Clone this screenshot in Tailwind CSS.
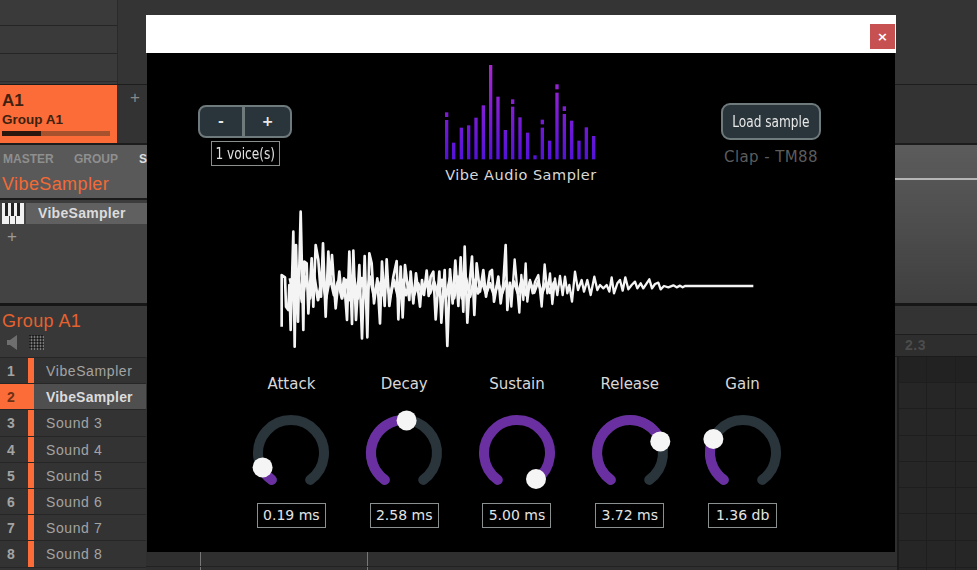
<!DOCTYPE html>
<html lang="en">
<head>
    <meta charset="utf-8">
    <title>Vibe Audio Sampler</title>
    <script src="https://cdn.jsdelivr.net/npm/@tailwindcss/browser@4"></script>
</head>
<body class="relative h-[570px] w-[977px] overflow-hidden bg-[#333333] font-['Liberation_Sans',sans-serif]">

    <!-- host app behind the plugin -->
    <div class="flex h-[85px] border-b border-[#1c1c1c]">
        <div class="w-[118px] border-r border-[#2a2a2a] bg-[#3a3a3a]">
            <div class="h-[26px] border-b border-[#252525]"></div>
            <div class="h-[28px] border-b border-[#252525]"></div>
            <div class="h-[28px] border-b border-[#2c2c2c]"></div>
        </div>
        <div class="flex-1 bg-[#343434]"></div>
    </div>
    <div class="flex h-[60px] border-b-2 border-[#1c1c1c] bg-[#333333]">
        <div class="flex h-[58px] w-[117px] flex-col bg-[#fb6c38] pl-[2px] text-[#40210f]">
            <div class="mt-[6px] text-[17px] leading-[20px] font-bold">A1</div>
            <div class="text-[13.5px] leading-[18px] font-bold">Group A1</div>
            <div class="mt-[2px] flex h-[5px] w-[108px] bg-[#a8512d]"><div class="w-[39px] bg-[#2b170e]"></div></div>
        </div>
        <div class="ml-[13px] text-[17px] leading-[26px] text-[#888888]">+</div>
    </div>

    <div class="flex h-[161px] border-b-[3px] border-[#161616]">
        <div class="flex w-[500px] flex-col bg-[#434343]">
            <div class="h-[53px] bg-[#595959] pl-[3px]">
                <div class="flex pt-[7px] text-[12px] leading-[14px] font-bold text-[#8f8f8f]">
                    <span class="w-[71px]">MASTER</span><span class="w-[65px]">GROUP</span><span class="text-[#dddddd]">S</span>
                </div>
                <div class="mt-[8px] -ml-[1px] text-[18px] leading-[21px] tracking-[0.4px] text-[#f26a35]">VibeSampler</div>
            </div>
            <div class="h-[5px] border-t-2 border-[#1b1b1b] bg-[#3c3c3c]"></div>
            <div class="flex h-[21px]">
                <svg class="ml-[2px] w-[22px]" width="22" height="21" viewBox="0 0 22 21">
                    <rect width="22" height="21" fill="#f2f2f2"/>
                    <rect x="3" width="3" height="13" fill="#222222"/><rect x="9" width="3" height="13" fill="#222222"/><rect x="15" width="3" height="13" fill="#222222"/>
                    <rect x="7" y="13" width="1" height="8" fill="#444444"/><rect x="13" y="13" width="1" height="8" fill="#444444"/>
                </svg>
                <div class="ml-[2px] flex-1 bg-[#606060] pl-[12px] text-[14px] leading-[21px] font-bold tracking-[0.3px] text-[#dcdcdc]">VibeSampler</div>
            </div>
            <div class="ml-[7px] text-[17px] leading-[26px] text-[#9a9a9a]">+</div>
        </div>
        <div class="flex-1 bg-linear-to-b from-[#5c5c5c] to-[#3f3f3f] pt-[33px]"><div class="h-[2px] bg-[#b5b5b5]"></div></div>
    </div>

    <div class="flex h-[51px]">
        <div class="w-[500px] bg-[#383838] pl-[2px]">
            <div class="pt-[5px] text-[18px] leading-[21px] tracking-[0.4px] text-[#e5622f]">Group A1</div>
            <div class="mt-[3px] flex items-center">
                <svg class="ml-[5px]" width="11" height="15" viewBox="0 0 11 15"><path d="M0 5h3l7-5v15l-7-5H0z" fill="#6e6e6e"/></svg>
                <div class="ml-[11px] h-[15px] w-[15px] bg-[repeating-linear-gradient(90deg,#7a7a7a_0_2px,transparent_2px_3px),repeating-linear-gradient(0deg,#7a7a7a_0_2px,#383838_2px_3px)] bg-blend-multiply"></div>
            </div>
        </div>
        <div class="flex-1 bg-[#333333]">
            <div class="h-[29px] border-b border-[#1d1d1d]"></div>
            <div class="flex h-[22px] items-center border-b border-[#1b1b1b] bg-[#2e2e2e] pl-[405px] text-[14px] font-bold tracking-[0.5px] text-[#4c4c4c]">2.3</div>
        </div>
    </div>

    <div class="flex">
        <div class="w-[146px] shrink-0 border-t border-[#262626] bg-[#333333] text-[14px] leading-[26px] tracking-[0.6px] text-[#a3a3a3]">
            <div class="flex h-[26.2px] border-b border-[#262626]"><span class="w-[28px] pl-[7px] font-bold">1</span><span class="w-[6px] bg-[#fb6c38]"></span><span class="pl-[12px]">VibeSampler</span></div>
            <div class="flex h-[26.2px] border-b border-[#262626]"><span class="w-[34px] bg-[#fb6c38] pl-[7px] font-bold text-[#6e3016]">2</span><span class="flex-1 bg-[#4f4f4f] pl-[12px] font-bold tracking-[0.2px] text-[#dcdcdc]">VibeSampler</span></div>
            <div class="flex h-[26.2px] border-b border-[#262626]"><span class="w-[28px] pl-[7px] font-bold">3</span><span class="w-[6px] bg-[#fb6c38]"></span><span class="pl-[12px]">Sound 3</span></div>
            <div class="flex h-[26.2px] border-b border-[#262626]"><span class="w-[28px] pl-[7px] font-bold">4</span><span class="w-[6px] bg-[#fb6c38]"></span><span class="pl-[12px]">Sound 4</span></div>
            <div class="flex h-[26.2px] border-b border-[#262626]"><span class="w-[28px] pl-[7px] font-bold">5</span><span class="w-[6px] bg-[#fb6c38]"></span><span class="pl-[12px]">Sound 5</span></div>
            <div class="flex h-[26.2px] border-b border-[#262626]"><span class="w-[28px] pl-[7px] font-bold">6</span><span class="w-[6px] bg-[#fb6c38]"></span><span class="pl-[12px]">Sound 6</span></div>
            <div class="flex h-[26.2px] border-b border-[#262626]"><span class="w-[28px] pl-[7px] font-bold">7</span><span class="w-[6px] bg-[#fb6c38]"></span><span class="pl-[12px]">Sound 7</span></div>
            <div class="flex h-[26.2px] border-b border-[#262626]"><span class="w-[28px] pl-[7px] font-bold">8</span><span class="w-[6px] bg-[#fb6c38]"></span><span class="pl-[12px]">Sound 8</span></div>
        </div>
        <div class="relative h-[213px] flex-1 bg-[#2f2f2f]">
            <div class="absolute top-0 bottom-0 left-[54px] w-px bg-[#777777]"></div>
            <div class="absolute top-0 bottom-0 left-[221px] w-px bg-[#777777]"></div>
            <div class="absolute top-[209px] right-0 left-0 h-px bg-[#222222]"></div>
            <div class="absolute top-0 right-0 bottom-0 w-[80px] border-l-2 border-[#1b1b1b] bg-[#262626]">
                <div class="h-[26px] border-b border-[#1e1e1e] bg-[#222222]"></div>
                <div class="h-[26.3px] border-b border-[#1e1e1e]"></div>
                <div class="h-[26.3px] border-b border-[#1e1e1e]"></div>
                <div class="h-[26.3px] border-b border-[#1e1e1e]"></div>
                <div class="h-[26.3px] border-b border-[#1e1e1e]"></div>
                <div class="h-[26.3px] border-b border-[#1e1e1e]"></div>
                <div class="h-[26.3px] border-b border-[#1e1e1e]"></div>
                <div class="h-[27px] border-b border-[#1e1e1e]"></div>
                <div class="absolute top-0 bottom-0 left-[27px] w-px bg-[#1e1e1e]"></div>
                <div class="absolute top-0 bottom-0 left-[56px] w-px bg-[#1e1e1e]"></div>
            </div>
        </div>
    </div>

    <!-- plugin window -->
    <div class="absolute top-[15px] left-[146px] flex h-[537px] w-[750px] flex-col font-['DejaVu_Sans',sans-serif]">
        <div class="flex h-[38px] shrink-0 items-start justify-end bg-white pt-[9px] pr-px">
            <button class="flex h-[25px] w-[25px] items-center justify-center bg-[#c75050] text-[13px] leading-none font-bold text-white">×</button>
        </div>
        <div class="mx-px flex-1 bg-black">
            <div class="flex">
                <div class="mt-[52px] ml-[51px] w-[94px] shrink-0">
                    <div class="flex h-[33px] rounded-[8px] border-2 border-[#6f7a7c] bg-[#29353b] text-[14px] leading-[28px] font-bold text-[#e8e8e8]">
                        <span class="w-[45px] border-r-[3px] border-[#6f7a7c] text-center">-</span>
                        <span class="flex-1 text-center">+</span>
                    </div>
                    <div class="mx-auto mt-[3px] flex h-[25px] w-[69px] justify-center border border-[#8a8f8f] text-[16px] leading-[23px] whitespace-nowrap text-[#e0e0e0]"><span class="shrink-0 scale-x-[0.76]">1 voice(s)</span></div>
                </div>
                <div class="mt-[7px] ml-[148px] w-[160px] shrink-0">
                    <svg width="160" height="110" viewBox="60 30 480 330">
                        <defs>
                            <linearGradient id="bars" gradientUnits="userSpaceOnUse" x1="0" y1="45" x2="0" y2="328">
                                <stop offset="0" stop-color="#a828d0"/>
                                <stop offset="1" stop-color="#5312d8"/>
                            </linearGradient>
                        </defs>
                        <g fill="url(#bars)">
                            <rect x="75" y="187" width="10" height="14"/><rect x="75" y="210" width="10" height="118"/>
                            <rect x="96" y="278" width="10" height="50"/>
                            <rect x="119" y="233" width="10" height="95"/>
                            <rect x="141" y="226" width="10" height="102"/>
                            <rect x="163" y="203" width="10" height="125"/>
                            <rect x="185" y="166" width="10" height="162"/>
                            <rect x="207" y="45" width="10" height="283"/>
                            <rect x="229" y="140" width="10" height="188"/>
                            <rect x="251" y="240" width="10" height="88"/>
                            <rect x="273" y="148" width="10" height="14"/><rect x="273" y="170" width="10" height="158"/>
                            <rect x="295" y="202" width="10" height="126"/>
                            <rect x="318" y="248" width="10" height="80"/>
                            <rect x="340" y="316" width="10" height="12"/>
                            <rect x="362" y="209" width="10" height="14"/><rect x="362" y="233" width="10" height="95"/>
                            <rect x="384" y="272" width="10" height="56"/>
                            <rect x="406" y="103" width="10" height="15"/><rect x="406" y="128" width="10" height="200"/>
                            <rect x="428" y="169" width="10" height="14"/><rect x="428" y="192" width="10" height="136"/>
                            <rect x="450" y="212" width="10" height="116"/>
                            <rect x="472" y="272" width="10" height="56"/>
                            <rect x="494" y="232" width="10" height="96"/>
                            <rect x="516" y="258" width="10" height="70"/>
                        </g>
                    </svg>
                    <div class="-mt-[5px] -mr-[7px] -ml-[5px] text-center text-[14.5px] leading-[20px] tracking-[0.5px] whitespace-nowrap text-[#d8d8d8]">Vibe Audio Sampler</div>
                </div>
                <div class="mt-[50px] ml-[121px] w-[100px] shrink-0 text-center">
                    <button class="flex h-[37px] w-[100px] items-center justify-center rounded-[9px] border-2 border-[#6f7a7c] bg-[#29353b] text-[16px] whitespace-nowrap text-[#e8e8e8]"><span class="shrink-0 scale-x-[0.76]">Load sample</span></button>
                    <div class="mt-[6px] text-[15px] leading-[22px] tracking-[0.4px] whitespace-nowrap text-[#5c5c5c]">Clap - TM88</div>
                </div>
            </div>

            <svg class="mt-[15px] ml-[123px] blur-[0.6px]" width="500" height="155" viewBox="0 0 1500 465" fill="none" stroke="#f4f4f4" stroke-width="8" stroke-linejoin="round">
                <polyline stroke-width="9" points="60,235 72,300 84,225 96,305 108,230 120,295 132,225 144,300 156,235 168,295 180,230 192,285 204,245 216,295 228,240 240,300 252,235 264,295 276,235 288,295 300,230 312,290 324,245 336,285 348,240 360,290 372,240 384,290 396,240 408,285 420,245 432,285 444,250 456,280 468,245 480,280 492,245 504,285 516,240 528,290 540,235 552,295 564,230 576,295 588,235 600,290 612,240 624,280 636,245 648,280 660,250 672,285 684,250 696,280 708,245 720,285 732,245 744,280 756,240 768,285 780,245 792,278 804,245 816,280 828,248 840,278 852,248 864,275"/>
                <polyline points="35,380 35,225 45,232 48,320 55,330 58,255 62,390 70,95 74,440 78,135 84,365 92,35 100,390 103,185 110,190 115,340 125,175 130,320 137,135 145,180 153,290 159,130 167,350 175,155 180,250 186,165 197,325 208,215 215,290 222,235 231,360 238,155 246,372 250,152 258,360 268,195 276,415 284,168 292,412 298,160 305,190 312,310 322,235 330,370 336,185 344,318 350,178 358,318 370,230 380,183 385,358 392,200 398,352 405,195 418,300 422,215 430,310 438,220 450,320 456,240 462,285 470,212 476,288 482,230 490,215 497,358 508,215 514,368 524,210 532,438 540,208 548,310 556,182 565,318 572,172 580,335 584,140 592,368 600,235 606,170 613,345 620,190 630,275 640,210 648,290 660,215 666,210 672,305 685,230 692,310 700,250 707,135 712,330 720,245"/>
                <g transform="translate(720 0)">
                    <polyline stroke-width="7" points="0,250 4,320 14,178 28,338 34,225 40,300 47,190 52,305 60,240 68,280 75,245 85,225 95,320 104,193 112,280 120,220 127,312 135,235 142,285 150,228 158,285 165,230 172,280 178,255 186,305 195,215 204,270 215,240 222,275 232,240 242,285 253,230 262,270 270,255 280,265 290,255 298,275 305,232 312,280 322,250 330,240 338,272 346,232 355,268 365,255 375,245 382,265 392,250 400,265 410,250 418,238 426,265 435,252 445,248 452,268 462,258 475,262 490,256 500,262 510,257 518,262 525,258 730,258"/>
                </g>
            </svg>

            <div class="mt-[19px] ml-[88px] grid w-[564px] grid-cols-5 text-center text-[14px] text-[#d8d8d8]">
                <div class="flex flex-col items-center">
                    <div class="text-[15px] leading-[20px]">Attack</div>
                    <svg class="mt-[9px]" width="100" height="100" viewBox="-10 -10 100 100" fill="none" stroke-width="10" stroke-linecap="round">
                        <path d="M20.8 66.9A33 33 0 1 1 59.2 66.9" stroke="#29353b"/>
                        <path d="M20.8 66.9A33 33 0 0 1 10.6 54.9" stroke="#6a2fa0"/>
                        <circle cx="11.6" cy="54.4" r="10" fill="#f5f5f5"/>
                    </svg>
                    <div class="h-[25px] w-[69px] border border-[#8a8f8f] leading-[23px] text-[#e4e4e4]">0.19 ms</div>
                </div>
                <div class="flex flex-col items-center">
                    <div class="text-[15px] leading-[20px]">Decay</div>
                    <svg class="mt-[9px]" width="100" height="100" viewBox="-10 -10 100 100" fill="none" stroke-width="10" stroke-linecap="round">
                        <path d="M20.8 66.9A33 33 0 1 1 59.2 66.9" stroke="#29353b"/>
                        <path d="M20.8 66.9A33 33 0 0 1 42.6 7.1" stroke="#6a2fa0"/>
                        <circle cx="42.6" cy="7.4" r="10" fill="#f5f5f5"/>
                    </svg>
                    <div class="h-[25px] w-[69px] border border-[#8a8f8f] leading-[23px] text-[#e4e4e4]">2.58 ms</div>
                </div>
                <div class="flex flex-col items-center">
                    <div class="text-[15px] leading-[20px]">Sustain</div>
                    <svg class="mt-[9px]" width="100" height="100" viewBox="-10 -10 100 100" fill="none" stroke-width="10" stroke-linecap="round">
                        <path d="M20.8 66.9A33 33 0 1 1 59.2 66.9" stroke="#6a2fa0"/>
                        <circle cx="59" cy="66" r="10" fill="#f5f5f5"/>
                    </svg>
                    <div class="h-[25px] w-[69px] border border-[#8a8f8f] leading-[23px] text-[#e4e4e4]">5.00 ms</div>
                </div>
                <div class="flex flex-col items-center">
                    <div class="text-[15px] leading-[20px]">Release</div>
                    <svg class="mt-[9px]" width="100" height="100" viewBox="-10 -10 100 100" fill="none" stroke-width="10" stroke-linecap="round">
                        <path d="M20.8 66.9A33 33 0 1 1 59.2 66.9" stroke="#29353b"/>
                        <path d="M20.8 66.9A33 33 0 1 1 70.8 28.2" stroke="#6a2fa0"/>
                        <circle cx="70.3" cy="28.4" r="10" fill="#f5f5f5"/>
                    </svg>
                    <div class="h-[25px] w-[69px] border border-[#8a8f8f] leading-[23px] text-[#e4e4e4]">3.72 ms</div>
                </div>
                <div class="flex flex-col items-center">
                    <div class="text-[15px] leading-[20px]">Gain</div>
                    <svg class="mt-[9px]" width="100" height="100" viewBox="-10 -10 100 100" fill="none" stroke-width="10" stroke-linecap="round">
                        <path d="M20.8 66.9A33 33 0 1 1 59.2 66.9" stroke="#29353b"/>
                        <path d="M20.8 66.9A33 33 0 0 1 10.1 25.9" stroke="#6a2fa0"/>
                        <circle cx="10.4" cy="26" r="10" fill="#f5f5f5"/>
                    </svg>
                    <div class="h-[25px] w-[69px] border border-[#8a8f8f] leading-[23px] text-[#e4e4e4]">1.36 db</div>
                </div>
            </div>
        </div>
    </div>
</body>
</html>
